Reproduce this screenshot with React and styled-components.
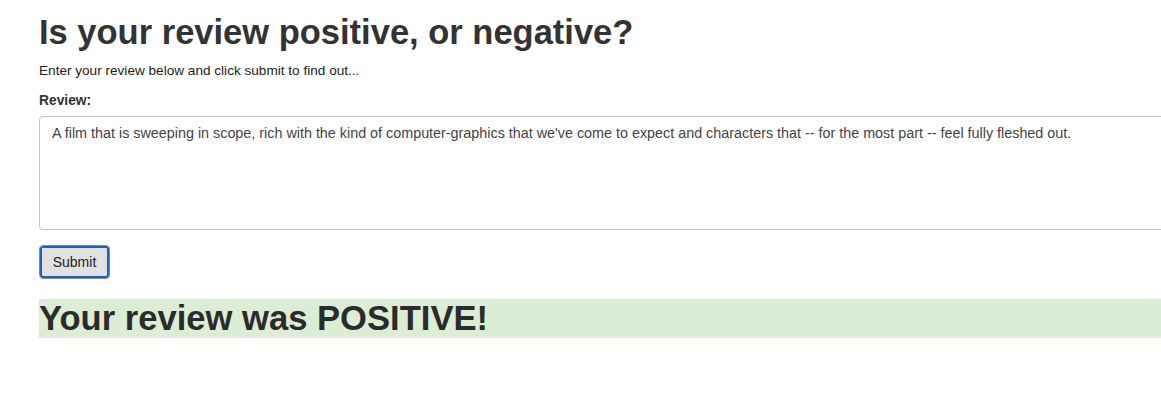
import React from "react";
import styled, { createGlobalStyle } from "styled-components";

const Global = createGlobalStyle`
  html, body { margin: 0; padding: 0; background: #fff; overflow: hidden; }
  body { font-family: "Liberation Sans", Arial, sans-serif; color: #333; }
`;

const Page = styled.div`
  padding-left: 39px;
  width: 1140px;
`;

const Title = styled.h1`
  margin: 13px 0 0;
  font-size: 34.5px;
  font-weight: 700;
  line-height: 39px;
  color: #333;
`;

const Lead = styled.p`
  margin: 10px 0 0;
  font-size: 13.6px;
  line-height: 17px;
  color: #222;
`;

const Form = styled.form`
  display: flex;
  flex-direction: column;
  align-items: flex-start;
  margin-top: 13px;
`;

const Label = styled.label`
  font-size: 13.8px;
  font-weight: 700;
  line-height: 17px;
  color: #333;
`;

const Area = styled.textarea`
  box-sizing: border-box;
  margin-top: 7px;
  width: 1140px;
  height: 114px;
  padding: 7px 12px;
  border: 1px solid #c4c4c4;
  border-radius: 4px;
  font-family: "Liberation Sans", Arial, sans-serif;
  font-size: 14.35px;
  line-height: 18px;
  color: #444;
  resize: none;
  outline: none;
`;

const Button = styled.button`
  box-sizing: border-box;
  margin-top: 15px;
  width: 71px;
  height: 34px;
  padding: 0;
  border: 1px solid #8a8a8a;
  border-radius: 4px;
  background: #e1e1e1;
  box-shadow: inset 0 0 0 2px #1a5fc7;
  font-family: "Liberation Sans", Arial, sans-serif;
  font-size: 14px;
  color: #222;
`;

const Result = styled.div`
  margin-top: 20px;
  height: 39px;
  width: 1140px;
  background: #dbeed5;
  font-size: 34.6px;
  font-weight: 700;
  line-height: 39px;
  color: #2b2b2b;
`;

export default function App() {
  return (
    <>
      <Global />
      <Page>
        <Title>Is your review positive, or negative?</Title>
        <Lead>Enter your review below and click submit to find out...</Lead>
        <Form onSubmit={(e) => e.preventDefault()}>
          <Label htmlFor="review">Review:</Label>
          <Area
            id="review"
            defaultValue="A film that is sweeping in scope, rich with the kind of computer-graphics that we've come to expect and characters that -- for the most part -- feel fully fleshed out."
          />
          <Button type="submit">Submit</Button>
        </Form>
        <Result>Your review was POSITIVE!</Result>
      </Page>
    </>
  );
}
